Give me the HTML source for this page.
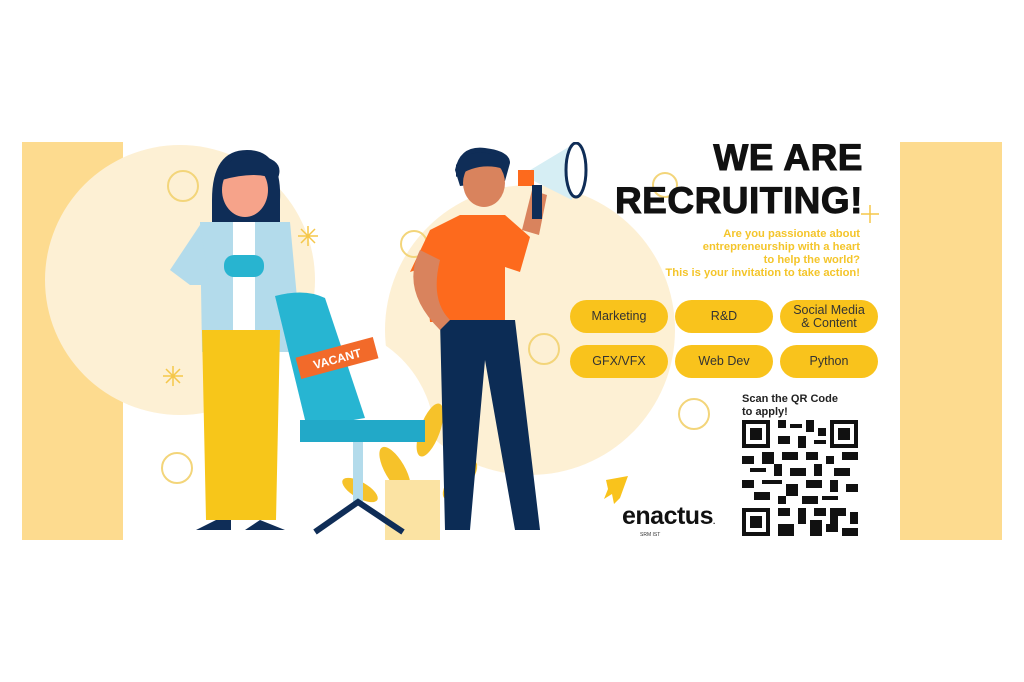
<!DOCTYPE html>
<html><head><meta charset="utf-8"><style>
*{margin:0;padding:0;box-sizing:border-box}
body{width:1024px;height:682px;background:#fff;position:relative;overflow:hidden;font-family:"Liberation Sans",sans-serif}
.b{position:absolute}
.pill{position:absolute;width:98px;height:33px;border-radius:17px;background:#f9c31c;color:#333;font-size:12.5px;display:flex;align-items:center;justify-content:center;text-align:center;line-height:13px}
</style></head><body>
<div class="b" style="left:22px;top:142px;width:980px;height:398px;background:#fff;overflow:hidden">
<svg width="980" height="398" viewBox="22 142 980 398" style="position:absolute;left:0;top:0">
<rect x="22" y="142" width="101" height="398" fill="#fddb8f"/>
<rect x="900" y="142" width="102" height="398" fill="#fddb8f"/>
<circle cx="180" cy="280" r="135" fill="#fdf0d4"/>
<circle cx="530" cy="330" r="145" fill="#fdf0d4"/>
<circle cx="320" cy="440" r="115" fill="#fff"/>
<g fill="none" stroke="#f3d57a" stroke-width="2">
<circle cx="183" cy="186" r="15"/><circle cx="414" cy="244" r="13"/><circle cx="544" cy="349" r="15"/>
<circle cx="694" cy="414" r="15"/><circle cx="177" cy="468" r="15"/><circle cx="665" cy="185" r="12"/>
</g>
<g stroke="#f5c74a" stroke-width="1.5">
<path d="M308 226v20M298 236h20M301 229l14 14M315 229l-14 14"/>
<path d="M173 366v20M163 376h20M166 369l14 14M180 369l-14 14"/>
<path d="M870 205v18M861 214h18"/>
</g>
<g fill="#f6c22a"><ellipse cx="395" cy="470" rx="10" ry="26" transform="rotate(-30 395 470)"/><ellipse cx="430" cy="430" rx="10" ry="28" transform="rotate(20 430 430)"/><ellipse cx="460" cy="480" rx="10" ry="24" transform="rotate(40 460 480)"/><ellipse cx="360" cy="490" rx="8" ry="20" transform="rotate(-60 360 490)"/></g>
<rect x="385" y="480" width="55" height="60" fill="#fbe3a3"/>
<path d="M212 200q0-50 35-50t33 50v22h-68z" fill="#0f2d57"/>
<ellipse cx="245" cy="190" rx="23" ry="27" fill="#f6a38a"/>
<path d="M222 180q5-30 35-25t20 25q-20-10-55 0z" fill="#0f2d57"/>
<path d="M200 222h90l12 130h-100z" fill="#b3dbeb"/>
<path d="M170 270l30-45 10 60-20 0z" fill="#b3dbeb"/>
<rect x="233" y="222" width="22" height="110" fill="#fff"/>
<rect x="224" y="255" width="40" height="22" rx="10" fill="#28b4d0"/>
<path d="M202 330h78l-4 190h-70z" fill="#f7c61a"/>
<path d="M196 530l20-10 15 0v10zM245 530l15-10 25 10z" fill="#0f2d57"/>
<path d="M275 296q30-8 50 2l40 120-58 10z" fill="#27b5d2"/>
<path d="M300 420h125v22h-125z" fill="#22a9c8"/>
<rect x="353" y="442" width="10" height="60" fill="#b3dbeb"/>
<path d="M315 532l43-30 45 30" stroke="#0f2d57" stroke-width="6" fill="none"/>
<g transform="rotate(-15 337 358)"><rect x="297" y="347" width="80" height="22" fill="#f26a2a"/><text x="337" y="363" font-size="12" font-weight="bold" fill="#fff" text-anchor="middle">VACANT</text></g>
<path d="M455 170q5-25 30-22t25 15l-5 18-45 5z" fill="#0f2d57"/>
<ellipse cx="484" cy="183" rx="21" ry="24" fill="#d9835d"/>
<path d="M456 165q15-20 45-8l3 12q-25-8-48 8z" fill="#0f2d57"/>
<path d="M430 230l30-15h45l25 22-10 35-15-5 0 55h-75l-5-55-15 5z" fill="#fd6a1d"/>
<path d="M440 320h75l25 210h-25l-30-170-15 170h-25z" fill="#0c2c55"/>
<path d="M420 250q-20 40 20 80l10-10q-20-20-10-60z" fill="#d9835d"/>
<path d="M522 230l10-40 15 5-8 40z" fill="#d9835d"/>
<path d="M522 175l50-30v55z" fill="#d6eef4"/><ellipse cx="576" cy="170" rx="10" ry="27" fill="#fff" stroke="#0f2d57" stroke-width="3"/>
<rect x="518" y="170" width="16" height="16" fill="#fd6a1d"/><rect x="532" y="185" width="10" height="34" fill="#0f2d57"/>
<path d="M606 480l22-4-8 22-6 6 -2-10-8 5 4-10z" fill="#f9c31c"/>
</svg>
<div class="b" style="left:560px;top:-6px;width:281px;text-align:right;font-size:37px;font-weight:900;color:#111;line-height:43px;letter-spacing:0.5px;-webkit-text-stroke:1px #111">WE ARE<br>RECRUITING!</div>
<div class="b" style="left:548px;top:86px;width:290px;text-align:right;font-size:11.2px;color:#f4c52a;line-height:13px;font-weight:bold">Are you passionate about<br>entrepreneurship with a heart<br>to help the world?<br>This is your invitation to take action!</div>
<div class="pill" style="left:548px;top:158px">Marketing</div>
<div class="pill" style="left:653px;top:158px">R&amp;D</div>
<div class="pill" style="left:758px;top:158px">Social Media<br>&amp; Content</div>
<div class="pill" style="left:548px;top:203px">GFX/VFX</div>
<div class="pill" style="left:653px;top:203px">Web Dev</div>
<div class="pill" style="left:758px;top:203px">Python</div>
<div class="b" style="left:720px;top:251px;font-size:11px;font-weight:bold;color:#222;line-height:13px">Scan the QR Code<br>to apply!</div>
<div class="b" style="left:600px;top:360px;font-size:25px;color:#111;letter-spacing:-0.5px;font-weight:bold">enactus<span style="font-size:8px">.</span></div>
<div class="b" style="left:618px;top:390px;font-size:5px;color:#333">SRM IST</div>
<svg class="b" style="left:720px;top:278px" width="116" height="116" viewBox="0 0 29 29" shape-rendering="crispEdges">
<g fill="#111">
<path d="M0 0h7v7h-7zM1 1v5h5v-5zM2 2h3v3h-3z" fill-rule="evenodd"/>
<path d="M22 0h7v7h-7zM23 1v5h5v-5zM24 2h3v3h-3z" fill-rule="evenodd"/>
<path d="M0 22h7v7h-7zM1 23v5h5v-5zM2 24h3v3h-3z" fill-rule="evenodd"/>
<path d="M9 0h2v2h-2zM12 1h3v1h-3zM16 0h2v3h-2zM19 2h2v2h-2zM9 4h3v2h-3zM14 4h2v3h-2zM18 5h3v1h-3zM10 8h4v2h-4zM0 9h3v2h-3zM5 8h3v3h-3zM16 8h3v2h-3zM21 9h2v2h-2zM25 8h4v2h-4zM2 12h4v1h-4zM8 11h2v3h-2zM12 12h4v2h-4zM18 11h2v3h-2zM23 12h4v2h-4zM0 15h3v2h-3zM5 15h5v1h-5zM11 16h3v3h-3zM16 15h4v2h-4zM22 15h2v3h-2zM26 16h3v2h-3zM3 18h4v2h-4zM9 19h2v2h-2zM15 19h4v2h-4zM20 19h4v1h-4zM9 22h3v2h-3zM14 22h2v4h-2zM18 22h3v2h-3zM22 22h4v2h-4zM27 23h2v3h-2zM9 26h4v3h-4zM17 25h3v4h-3zM21 26h3v2h-3zM25 27h4v2h-4zM22 24h2v2h-2z"/>
</g></svg>
</div>
</body></html>
